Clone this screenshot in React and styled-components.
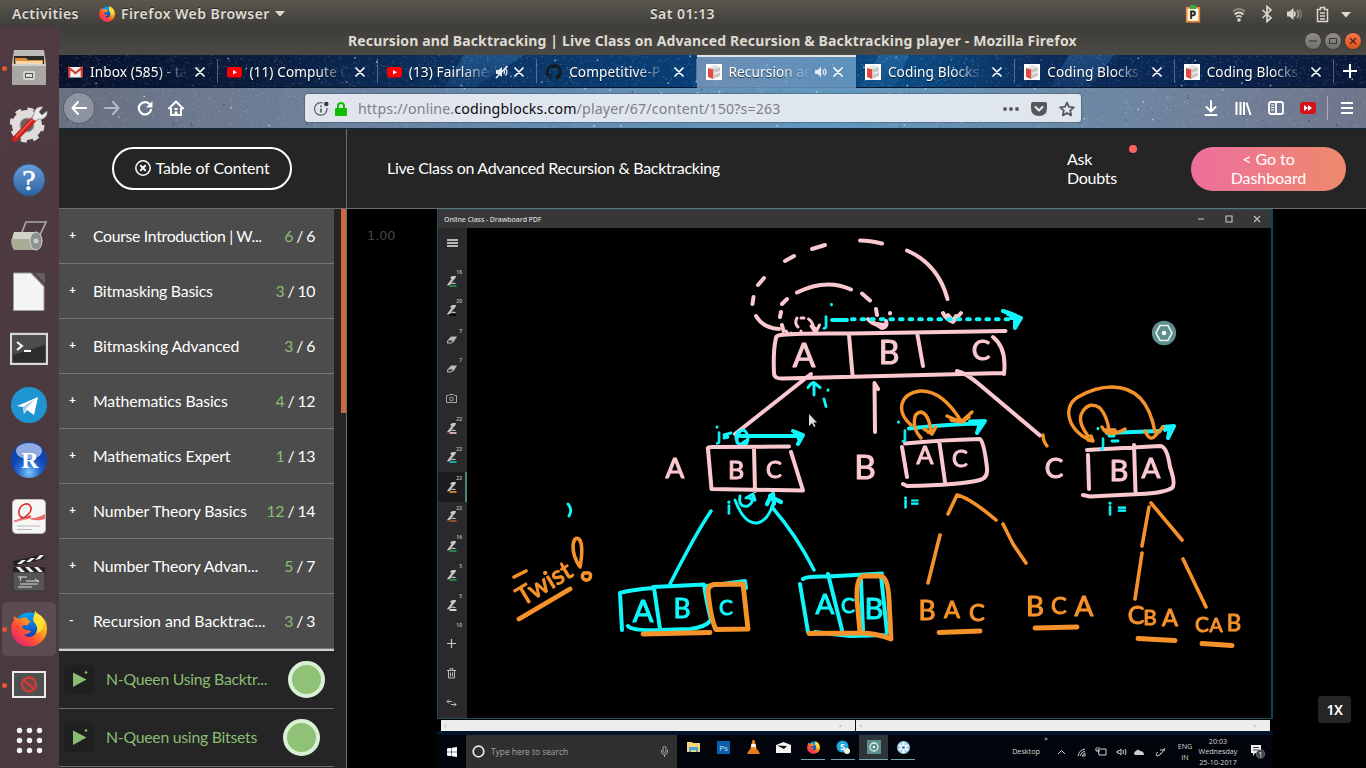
import React from "react";
import styled, { createGlobalStyle, css } from "styled-components";

const Global = createGlobalStyle`
  * { box-sizing: border-box; }
  html, body { margin: 0; padding: 0; }
  body { width: 1366px; height: 768px; overflow: hidden; background: #000; }
  svg { display: block; flex: none; }
`;

const ubuntu = `"Noto Sans", "Open Sans", sans-serif`;
const cabin = `Lato, "Open Sans", sans-serif`;
const segoe = `"Open Sans", "Noto Sans", sans-serif`;

const Screen = styled.div`
  width: 1366px;
  height: 768px;
  display: flex;
  flex-direction: column;
  overflow: hidden;
  background: #000;
`;

/* ---------- desktop top bar ---------- */
const TopBar = styled.header`
  height: 27px;
  flex: none;
  display: grid;
  grid-template-columns: 1fr auto 1fr;
  align-items: center;
  padding: 0 13px 0 12px;
  background: linear-gradient(#5a574e, #3e3d39);
  color: #dfdbd2;
  font: 600 14px/27px ${ubuntu};
  letter-spacing: 0.45px;
  text-shadow: 0 -1px 0 rgba(0, 0, 0, 0.45);
`;
const TopGroup = styled.div`
  display: flex;
  align-items: center;
  justify-content: ${(p) => (p.$end ? "flex-end" : "flex-start")};
`;
const TopLabel = styled.span`
  margin-left: ${(p) => p.$ml || 0}px;
  white-space: nowrap;
`;
const IconSlot = styled.span`
  display: flex;
  margin-left: ${(p) => p.$ml || 0}px;
`;

const Body = styled.div`
  flex: 1;
  min-height: 0;
  display: flex;
`;

/* ---------- dock ---------- */
const Dock = styled.nav`
  width: 59px;
  flex: none;
  padding-top: 13px;
  background: linear-gradient(170deg, #503b42, #4b3a3f 45%, #493a40);
  overflow: hidden;
`;
const DockItem = styled.div`
  height: 56.08px;
  display: flex;
  align-items: center;
  position: relative;
  padding-left: 2px;
  &::before {
    content: "";
    position: absolute;
    left: 2px;
    top: 26px;
    width: 5px;
    height: 5px;
    border-radius: 50%;
    z-index: 1;
    background: ${(p) => (p.$running ? "#e8562a" : "transparent")};
  }
`;
const DockTile = styled.div`
  width: 54px;
  height: 54px;
  border-radius: 5px;
  display: flex;
  align-items: center;
  justify-content: center;
  background: ${(p) => (p.$active ? "#5c4c52" : "transparent")};
`;

/* ---------- browser ---------- */
const Browser = styled.main`
  flex: 1;
  min-width: 0;
  display: flex;
  flex-direction: column;
`;
const TitleBar = styled.div`
  height: 28px;
  flex: none;
  display: flex;
  align-items: center;
  padding: 0 5px 0 289px;
  background: linear-gradient(#3e3d39, #4a4944);
  color: #dfdbd2;
  font: 700 14px/28px ${ubuntu};
`;
const TitleText = styled.span`
  flex: 1;
  letter-spacing: 0.14px;
  white-space: nowrap;
`;
const WinButton = styled.span`
  width: 16px;
  height: 16px;
  margin-left: 4px;
  border-radius: 50%;
  display: flex;
  align-items: center;
  justify-content: center;
  background: ${(p) => (p.$close ? "linear-gradient(#f4764b,#e0521f)" : "linear-gradient(#8f8d85,#706f69)")};
  box-shadow: 0 0 0 0.5px #2c2b28;
`;
const Chrome = styled.div`
  height: 74px;
  flex: none;
  position: relative;
  background: #0a3157;
`;
const Sky = styled.svg`
  position: absolute;
  left: 0;
  top: 0;
  pointer-events: none;
`;
const TabStrip = styled.div`
  position: relative;
  height: 33px;
  display: flex;
  border-bottom: 1px solid #06152c;
  padding-right: 32px;
`;
const Tab = styled.div`
  flex: 1 1 0;
  min-width: 0;
  display: flex;
  align-items: center;
  padding: 0 13px 0 9px;
  ${(p) =>
    p.$active
      ? css`
          background: linear-gradient(90deg, rgba(148, 172, 204, 0.72), rgba(128, 176, 212, 0.7));
          border-top: 2px solid #dfe3ea;
          margin-bottom: -1px;
          padding-bottom: 1px;
        `
      : css`
          padding-top: 1px;
          background: linear-gradient(rgba(190, 200, 215, 0.4), rgba(190, 200, 215, 0.4)) right 50% / 1px 24px no-repeat;
        `}
  color: #fff;
  font: 13.6px/30px ${ubuntu};
`;
const TabLabel = styled.span`
  flex: 1;
  min-width: 0;
  margin-left: 7px;
  overflow: hidden;
  white-space: nowrap;
  letter-spacing: 0.12px;
  text-shadow: 0 1px 1px #000a;
  mask-image: linear-gradient(90deg, #000 calc(100% - 34px), transparent 97%);
`;
const NewTab = styled.div`
  width: 32px;
  margin-right: -32px;
  display: flex;
  align-items: center;
  justify-content: center;
`;
const NavBar = styled.div`
  position: relative;
  height: 40px;
  display: flex;
  align-items: center;
  padding: 0 13px 0 4px;
`;
const BackButton = styled.span`
  width: 32px;
  height: 32px;
  border-radius: 50%;
  border: 1px solid rgba(60, 65, 75, 0.6);
  background: rgba(165, 170, 182, 0.6);
  display: flex;
  align-items: center;
  justify-content: center;
`;
const UrlBar = styled.div`
  width: 778px;
  height: 28px;
  margin-left: 121px;
  padding: 1px 6px 0 8px;
  border-radius: 3px;
  display: flex;
  align-items: center;
  background: rgba(234, 238, 244, 0.92);
  box-shadow: 0 0 1px 1px rgba(40, 60, 90, 0.35);
  color: #7e8085;
  font: 14.2px/27px ${ubuntu};
`;
const Url = styled.span`
  flex: 1;
  margin-left: 11px;
  letter-spacing: 0.15px;
  b {
    font-weight: 400;
    color: #0c0c0d;
  }
`;
const NavDivider = styled.span`
  width: 1px;
  height: 24px;
  margin: 0 13px 0 11px;
  background: rgba(225, 228, 235, 0.5);
`;

/* ---------- course page ---------- */
const Page = styled.div`
  flex: 1;
  min-height: 0;
  display: flex;
  background: #252525;
  font-family: ${cabin};
  color: #fff;
`;
const Sidebar = styled.aside`
  width: 288px;
  flex: none;
  border-right: 1px solid #6d6d6d;
  display: flex;
  flex-direction: column;
`;
const SidebarHead = styled.div`
  height: 80px;
  flex: none;
  border-bottom: 1px solid #6d6d6d;
  display: flex;
  justify-content: center;
  padding: 18px 0 0 0;
`;
const TocButton = styled.button`
  width: 180px;
  height: 43px;
  border: 2px solid #fff;
  border-radius: 22px;
  background: transparent;
  color: #fff;
  display: flex;
  align-items: center;
  justify-content: center;
  gap: 4px;
  padding: 0 0 2px 1px;
  font: 16px ${cabin};
  letter-spacing: -0.14px;
  margin-left: -1px;
`;
const ListWrap = styled.div`
  flex: 1;
  min-height: 0;
  display: flex;
  justify-content: space-between;
`;
const List = styled.div`
  width: 275px;
`;
const Thumb = styled.div`
  width: 5px;
  height: 204px;
  background: #cb6a43;
`;
const Section = styled.div`
  height: 55px;
  display: flex;
  align-items: center;
  padding: 0 19px 1px 10px;
  border-bottom: 1px solid #757575;
  background: #4c4c4c;
  font-size: 15.8px;
`;
const Sign = styled.span`
  width: 24px;
  font-size: 12px;
  font-weight: 700;
  margin-top: -3px;
`;
const SectionName = styled.span`
  flex: 1;
  letter-spacing: ${(p) => p.$ls || 0}px;
  white-space: nowrap;
`;
const Count = styled.span`
  letter-spacing: -0.35px;
  word-spacing: -0.5px;
  white-space: nowrap;
  em {
    font-style: normal;
    color: #8abd74;
  }
`;
const OpenLine = styled.div`
  height: 2px;
  background: #cfcfcf;
`;
const Lesson = styled.div`
  height: 58px;
  display: flex;
  align-items: center;
  padding: 0 ${(p) => p.$pr}px 0 5px;
  border-bottom: 1px solid #6d6d6d;
  color: #8abd74;
  font-size: 15.8px;
`;
const PlayBox = styled.span`
  width: 30px;
  height: 29px;
  border-radius: 5px;
  background: #1f1f1f;
  margin-right: 12px;
`;
const LessonName = styled.span`
  flex: 1;
  white-space: nowrap;
  padding-bottom: 2px;
  letter-spacing: -0.26px;
`;
const DoneRing = styled.span`
  width: 37px;
  height: 37px;
  border-radius: 50%;
  border: 4px solid #d8f0d3;
  background: #8fc177;
`;
const Content = styled.section`
  flex: 1;
  min-width: 0;
  display: flex;
  flex-direction: column;
`;
const ContentHead = styled.div`
  height: 80px;
  flex: none;
  border-bottom: 1px solid #6d6d6d;
  display: flex;
  align-items: center;
  padding: 0 20px 0 40px;
  font-size: 16px;
`;
const LessonTitle = styled.h1`
  flex: 1;
  margin: 0;
  padding-bottom: 2px;
  font-size: 16px;
  font-weight: 400;
  letter-spacing: -0.3px;
`;
const Ask = styled.div`
  width: 70px;
  margin: 0 54px 2px 0;
  line-height: 19px;
  letter-spacing: -0.3px;
  position: relative;
  padding-right: 10px;
`;
const AskDot = styled.span`
  position: absolute;
  left: 62px;
  top: -4px;
  width: 8px;
  height: 8px;
  border-radius: 50%;
  background: #ff6464;
`;
const Dashboard = styled.button`
  width: 155px;
  height: 44px;
  border: 0;
  border-radius: 22px;
  padding: 0 30px 2px;
  color: #fff;
  font: 16px/19px ${cabin};
  letter-spacing: -0.08px;
  background: linear-gradient(90deg, #ee6e9c, #ed8a6c);
`;
const Player = styled.div`
  flex: 1;
  min-height: 0;
  position: relative;
  display: flex;
  background: #000;
`;
const RateLabel = styled.span`
  width: 90px;
  padding: 18px 0 0 20px;
  font: 12.8px/18px "DejaVu Sans", sans-serif;
  color: #484848;
`;
const SpeedBadge = styled.span`
  position: absolute;
  left: 971px;
  top: 487px;
  width: 33px;
  height: 27px;
  border-radius: 3px;
  background: #252525;
  font: 600 14px/27px "Noto Sans", sans-serif;
  letter-spacing: -0.5px;
  text-align: center;
`;

/* ---------- video picture ---------- */
const Video = styled.div`
  width: 836px;
  display: flex;
  flex-direction: column;
  background: #000;
  font-family: ${segoe};
`;
const AppWindow = styled.div`
  height: 510px;
  border: 1px solid #1d5358;
  border-right: 2px solid #0a4166;
  display: flex;
  flex-direction: column;
`;
const AppTitle = styled.div`
  height: 18px;
  flex: none;
  background: #373737;
  display: flex;
  align-items: center;
  padding: 0 10px 0 6px;
  color: #d0d0d0;
  font-size: 7px;
  font-weight: 600;
`;
const AppTitleText = styled.span`
  flex: 1;
  letter-spacing: -0.1px;
`;
const AppBody = styled.div`
  flex: 1;
  display: flex;
  min-height: 0;
`;
const Tools = styled.div`
  width: 29px;
  flex: none;
  background: #2a2a2c;
  display: flex;
  flex-direction: column;
`;
const ToolMenu = styled.div`
  height: 38px;
  display: flex;
  justify-content: center;
  padding-top: 11px;
`;
const ToolScroll = styled.div`
  height: 363px;
  overflow: hidden;
`;
const Tool = styled.div`
  height: 29.45px;
  display: flex;
  align-items: center;
  justify-content: center;
  position: relative;
  background: ${(p) => (p.$active ? "#1c1c1e" : "none")};
  border-right: 2px solid ${(p) => (p.$active ? "#4f8280" : "transparent")};
`;
const ToolBadge = styled.span`
  position: absolute;
  right: 3px;
  top: 3px;
  color: #c4c4c4;
  font-size: 5px;
  font-weight: 600;
  line-height: 7px;
`;
const PageScroll = styled.div`
  height: 11px;
  margin: 1px 3px 0 4px;
  display: flex;
  background: #ededed;
  color: #999;
  font-size: 8px;
  line-height: 9px;
`;
const ScrollPart = styled.span`
  flex: ${(p) => p.$w};
  display: flex;
  justify-content: space-between;
  padding: 0 14px 0 3px;
  border-right: ${(p) => (p.$line ? "1px solid #111" : "0")};
`;
const ScreenEdge = styled.div`
  height: 4px;
  background: #03152d;
`;
const Taskbar = styled.div`
  height: 33px;
  display: flex;
  align-items: center;
  background: #01050b;
  color: #d5d5d5;
`;
const StartBox = styled.div`
  width: 29px;
  display: flex;
  justify-content: center;
`;
const Search = styled.div`
  width: 211px;
  height: 33px;
  padding: 0 8px 0 6px;
  display: flex;
  align-items: center;
  background: #303030;
  color: #a5a5a5;
  font-size: 8.4px;
`;
const SearchText = styled.span`
  flex: 1;
  margin-left: 6px;
`;
const TaskApp = styled.div`
  width: ${(p) => (p.$active ? 29 : 24)}px;
  height: 25px;
  margin-left: ${(p) => p.$ml}px;
  margin-bottom: 8px;
  display: flex;
  align-items: center;
  justify-content: center;
  background: ${(p) => (p.$active ? "#2d3538" : "none")};
  border-bottom: ${(p) => (p.$open ? "1px solid #6fa5a8" : "1px solid transparent")};
`;
const Tray = styled.div`
  flex: 1;
  display: flex;
  align-items: center;
  justify-content: flex-end;
  padding-right: 8px;
  font-size: 7.2px;
  white-space: nowrap;
`;
const TrayText = styled.span`
  margin-left: ${(p) => p.$ml || 0}px;
  width: ${(p) => p.$w}px;
  text-align: center;
  line-height: 10.6px;
  margin-top: ${(p) => p.$mt || 0}px;
`;

/* ---------- icons ---------- */
const Firefox = ({ s, id }) => (
  <svg width={s} height={s} viewBox="0 0 36 36">
    <defs>
      <linearGradient id={id + "o"} x1="1" y1="0" x2=".1" y2="1">
        <stop offset="0" stopColor="#fff04a" />
        <stop offset=".35" stopColor="#ffae1b" />
        <stop offset=".65" stopColor="#ff4d33" />
        <stop offset="1" stopColor="#e01a86" />
      </linearGradient>
      <linearGradient id={id + "b"} x1="0" y1="0" x2="0" y2="1">
        <stop offset="0" stopColor="#00a8ff" />
        <stop offset="1" stopColor="#1b2a9c" />
      </linearGradient>
    </defs>
    <circle cx="18" cy="16" r="14.5" fill={`url(#${id}b)`} />
    <path
      d="M3 5c-.3 2.500 0 4 0 4C0 13-.2 18 .6 22c1.800 8 9 13.500 17.400 13.500C28 35.500 36 28 36 18c0-6-2-9-5-12-1-2-5-3-7-6 0 5-3 7-1 11 4 4 4 8 2 11-3 5-10 5-12 1 3 1 5-1 7-3-1-1-3 0-5-1-4-1-5-4-2-5 2 0 2 1 4 0 0-2 2-2 3-4-3 0-3-1-4-3-3-1-6 0-8 1-2-1-4-2-5-3z"
      fill={`url(#${id}o)`}
    />
    <path d="M24 0c0 5-3 7-1 11 4 4 4 8 2 11 4 0 8-4 8-10 0-3-1-5-2-6-1-2-5-3-7-6z" fill="#ffe93a" opacity=".8" />
  </svg>
);

const dockIcons = {
  files: (
    <svg width="36" height="38" viewBox="0 0 36 38">
      <path d="M3 1h30l2 14H1z" fill="#bdbcb9" />
      <rect x="3" y="7" width="30" height="10" fill="#2c2b28" />
      <path d="M4 9h11l2 2h15v6H4z" fill="#e08a3c" />
      <path d="M5 12h26v3H5z" fill="#fbd7a8" />
      <rect x="1" y="15" width="34" height="21" rx="1" fill="#a8a7a4" />
      <rect x="1" y="15" width="34" height="2" fill="#cfcecb" />
      <rect x="12" y="22" width="12" height="9" rx="2" fill="#d6d5d2" />
      <rect x="14.500" y="24.500" width="7" height="4" fill="#ddd" stroke="#555" />
    </svg>
  ),
  tools: (
    <svg width="38" height="38" viewBox="0 0 38 38">
      <circle cx="17" cy="20" r="11" fill="none" stroke="#deddda" strokeWidth="8" />
      <circle cx="17" cy="20" r="15.500" fill="none" stroke="#deddda" strokeWidth="4" strokeDasharray="6 6.170" />
      <circle cx="17" cy="20" r="7" fill="#6d5f63" stroke="#aaa" />
      <path d="M5 34 27 11" stroke="#c8231c" strokeWidth="6" strokeLinecap="round" />
      <path d="M6 32 25 12" stroke="#ee5c50" strokeWidth="1.500" />
      <path d="M24 9c0-5 4-8 9-7l-4 5 3 3 5-4c1 5-3 9-8 8l-4 2-3-3z" fill="#e9e9e7" stroke="#888" strokeWidth=".7" />
    </svg>
  ),
  help: (
    <svg width="34" height="36" viewBox="0 0 34 36">
      <defs>
        <linearGradient id="hp" x2="0" y2="1"><stop stopColor="#6a9dd8" /><stop offset="1" stopColor="#2c62a0" /></linearGradient>
      </defs>
      <circle cx="17" cy="18" r="16" fill="url(#hp)" stroke="#2d5384" />
      <text x="17" y="28" textAnchor="middle" fontFamily="Liberation Serif, serif" fontSize="30" fill="#fff" stroke="#fff" strokeWidth=".6">?</text>
    </svg>
  ),
  roller: (
    <svg width="38" height="34" viewBox="0 0 38 34">
      <path d="M12 13 16 3h20l-7 15" fill="none" stroke="#a9aaa6" strokeWidth="1.700" />
      <path d="M4 13h22v18H5q-5-9-1-18z" fill="#d3d4c9" />
      <path d="M1 20h23v11H4q-3-4-3-11z" fill="#a9ab92" />
      <ellipse cx="26" cy="22" rx="6" ry="9" fill="#8e908c" stroke="#d5d5d3" />
      <circle cx="26" cy="22" r="2.500" fill="#ccc" />
    </svg>
  ),
  doc: (
    <svg width="34" height="40" viewBox="0 0 34 40">
      <path d="M1.500 1h18L32 14v24.500H1.500z" fill="#f4f4f3" stroke="#9b9b9b" />
      <path d="M23 1h10v11z" fill="#625f60" />
      <path d="M19.500 1 32 14" stroke="#777" strokeWidth="1.500" />
    </svg>
  ),
  terminal: (
    <svg width="38" height="34" viewBox="0 -2 38 34">
      <rect x="1" y="1" width="36" height="30" fill="#2b2c2b" stroke="#d8d8d5" strokeWidth="2.400" />
      <path d="M3 3h32v9L3 22z" fill="#4a4b4a" />
      <path d="m7 9 5 4-5 4M14 18h7" fill="none" stroke="#fff" strokeWidth="2" />
    </svg>
  ),
  telegram: (
    <svg width="36" height="36" viewBox="0 0 36 36">
      <circle cx="18" cy="18" r="18" fill="#1e95d2" />
      <path d="m6 19 21-9-4 18-7-5-3 4-1-7z" fill="#fff" />
      <path d="m12 20 12-8-9 10-2 5z" fill="#a9cde2" />
    </svg>
  ),
  r: (
    <svg width="38" height="38" viewBox="0 0 38 38">
      <defs>
        <radialGradient id="rs" cx=".5" cy=".85"><stop stopColor="#7ec8fa" /><stop offset=".6" stopColor="#2269cf" /><stop offset="1" stopColor="#1044ae" /></radialGradient>
      </defs>
      <circle cx="19" cy="18" r="18" fill="url(#rs)" />
      <ellipse cx="19" cy="9" rx="13" ry="8" fill="#b9cdf1" opacity=".75" />
      <text x="20" y="26" textAnchor="middle" fontFamily="Liberation Serif, serif" fontWeight="700" fontSize="24" fill="#fff">R</text>
    </svg>
  ),
  pdf: (
    <svg width="34" height="36" viewBox="0 0 34 36">
      <rect x=".5" y=".5" width="33" height="34" rx="4" fill="#f6f6f5" stroke="#bbb" />
      <path d="M2 22.500C15 19 20 13 19 8.500 17 2 8 5 7 12c-1 7 6 9 12 5" fill="none" stroke="#d92f2f" strokeWidth="1.600" />
      <path d="M15 19q10 1 18-4v5q-9 3-18-1z" fill="#ea6c6c" />
      <path d="M2 22.500q8-2 13-3" stroke="#ee8b8b" strokeWidth="1.500" />
      <path d="M5 27h23M5 30.500h15" stroke="#b8b8b8" />
    </svg>
  ),
  clapper: (
    <svg width="34" height="38" viewBox="0 0 34 38">
      <rect x="1" y="18" width="32" height="19" fill="#555" stroke="#333" />
      <path d="M1 7 32 0v5L2 12z" fill="#222" />
      <path d="m5 10 5-4h4l-5 4zM14 8l5-4h4l-5 4zM23 6l5-5h4l-4 4z" fill="#eee" />
      <rect x="1" y="13" width="32" height="5" fill="#222" />
      <path d="m4 13 5 5h4l-5-5zM13 13l5 5h4l-5-5zM22 13l5 5h4l-5-5z" fill="#eee" />
      <path d="M6 23h9M9 23l-1 4M14 27h13M23 25l4 3M6 33h14M8 30h18" stroke="#ddd" />
    </svg>
  ),
  firefox: <Firefox s={36} id="dk" />,
  blocked: (
    <svg width="34" height="27" viewBox="0 0 34 27">
      <rect x="1" y="1" width="32" height="25" fill="#4d504e" stroke="#ececeb" strokeWidth="2" />
      <circle cx="17" cy="13.500" r="7" fill="#6c4a49" stroke="#d23c38" strokeWidth="2.300" />
      <path d="m12 9 10 9" stroke="#d23c38" strokeWidth="2.300" />
    </svg>
  ),
  grid: (
    <svg width="27" height="27" viewBox="0 0 27 27">
      {[0, 1, 2].map((r) => [0, 1, 2].map((c) => <circle key={`${r}${c}`} cx={3.500 + c * 10} cy={3.500 + r * 10} r="2.700" fill="#f2f2f2" />))}
    </svg>
  ),
};

const favicons = {
  gmail: (
    <svg width="15" height="16" viewBox="0 0 15 16">
      <rect x="1" y="3" width="13" height="10.500" fill="#f1f1f1" />
      <path d="M1.200 13.500V4l6.300 5 6.300-5v9.500" fill="none" stroke="#d63c30" strokeWidth="2.200" />
    </svg>
  ),
  youtube: (
    <svg width="15" height="16" viewBox="0 0 15 16">
      <rect y="3" width="15" height="10.500" rx="2.500" fill="#f00" />
      <path d="m6 6 4 2.250-4 2.250z" fill="#fff" />
    </svg>
  ),
  github: (
    <svg width="16" height="16" viewBox="0 0 16 16">
      <path fill="#15191e" d="M8 0a8 8 0 0 0-2.500 15.600c.4.100.5-.2.500-.4v-1.500c-2.200.500-2.700-1-2.700-1-.4-.9-.9-1.200-.9-1.200-.7-.5.100-.5.100-.5.800.100 1.200.8 1.200.8.700 1.300 1.900.9 2.300.7.100-.5.300-.9.500-1.100-1.800-.2-3.600-.9-3.600-4 0-.9.300-1.600.8-2.100-.1-.2-.4-1 .1-2.100 0 0 .7-.2 2.200.8a7.500 7.500 0 0 1 4 0c1.500-1 2.200-.8 2.200-.8.400 1.100.2 1.900.1 2.100.5.600.8 1.300.8 2.100 0 3.100-1.900 3.700-3.700 3.900.3.300.6.800.6 1.500v2.200c0 .2.100.5.600.4A8 8 0 0 0 8 0z" />
    </svg>
  ),
  blocks: (
    <svg width="16" height="16" viewBox="0 0 16 16">
      <rect width="16" height="16" fill="#fff" />
      <path d="m2 4 5 1v10l-5-2z" fill="#e8483d" />
      <path d="m7 5 7-2v9l-7 3z" fill="#c9c9c9" />
      <path d="m2 4 6-3 6 2-7 2z" fill="#e3e3e3" />
      <path d="m8 9 6-2v1.500l-6 2z" fill="#f5f5f5" />
    </svg>
  ),
};

const CloseX = () => (
  <svg width="10" height="10" viewBox="0 0 10 10">
    <path d="m1 1 8 8M9 1 1 9" stroke="#fff" strokeWidth="1.700" strokeLinecap="round" />
  </svg>
);
const Speaker = ({ muted, color = "#e6eaf0", s = 14 }) => (
  <svg width={s} height={s} viewBox="0 0 14 14" fill="none" stroke={color} strokeWidth="1.300">
    <path d="M1 5h2.500L7 2v10L3.500 9H1z" fill={color} stroke="none" />
    <path d="M8.800 5q1.500 2 0 4M10.500 3.500q3 3.500 0 7" />
    {muted && <path d="M1 13 12.500 1" strokeWidth="1.800" />}
  </svg>
);

const tabs = [
  { icon: "gmail", label: "Inbox (585) - ta" },
  { icon: "youtube", label: "(11) Compute C" },
  { icon: "youtube", label: "(13) Fairlane", sound: "muted" },
  { icon: "github", label: "Competitive-P" },
  { icon: "blocks", label: "Recursion an", sound: "on", active: true },
  { icon: "blocks", label: "Coding Blocks -" },
  { icon: "blocks", label: "Coding Blocks -" },
  { icon: "blocks", label: "Coding Blocks -" },
];

function makeStars() {
  let seed = 7;
  const rnd = () => (seed = (seed * 16807) % 2147483647) / 2147483647;
  return Array.from({ length: 5200 }, () => {
    const big = rnd() > 0.98;
    return { x: rnd() * 1307, y: rnd() * 74, r: big ? 1.500 : 1, o: big ? 0.65 : 0.08 + rnd() * 0.24, d: rnd() > 0.6 };
  });
}
const stars = makeStars();

const StarField = () => (
  <Sky width="1307" height="74" viewBox="0 0 1307 74">
    <defs>
      <linearGradient id="strip">
        <stop offset="0" stopColor="#07122d" />
        <stop offset=".15" stopColor="#0a1c3d" />
        <stop offset=".32" stopColor="#0c3465" />
        <stop offset=".5" stopColor="#084078" />
        <stop offset=".66" stopColor="#0b4980" />
        <stop offset=".75" stopColor="#0b2c5c" />
        <stop offset=".85" stopColor="#0a2855" />
        <stop offset="1" stopColor="#0a1838" />
      </linearGradient>
      <linearGradient id="navbg">
        <stop offset="0" stopColor="#697080" />
        <stop offset=".18" stopColor="#6f7f98" />
        <stop offset=".35" stopColor="#6489ac" />
        <stop offset=".6" stopColor="#6298bd" />
        <stop offset=".75" stopColor="#6b8ba9" />
        <stop offset=".88" stopColor="#71819a" />
        <stop offset="1" stopColor="#70758a" />
      </linearGradient>
      <linearGradient id="beam" x2="0" y2="1">
        <stop stopColor="#4fa0e0" stopOpacity=".5" />
        <stop offset="1" stopColor="#4fa0e0" stopOpacity=".15" />
      </linearGradient>
    </defs>
    <rect width="1307" height="33" fill="url(#strip)" />
    <path d="M385 33 405 0h60l-50 33zM800 33l20-33h30l-15 33zM990 33l20-33h45l-25 33z" fill="url(#beam)" opacity=".55" />
    <rect y="33" width="1307" height="40" fill="url(#navbg)" />
    {stars.map((s, i) => (
      <rect key={i} x={s.x} y={s.y} width={s.r} height={s.r} fill={s.d && s.y > 33 ? "#2b3f5f" : "#e6f0ff"} opacity={s.o} />
    ))}
    <rect y="73" width="1307" height="1" fill="#082542" />
  </Sky>
);

/* ---------- whiteboard ---------- */
const P = "#fbc8d0";
const C = "#10f6fb";
const O = "#f6922a";

const strokes = [
  [P, 4, "M812 249 825 245M785 261l9-5M758 285l6-7M752.500 304l1-7M756 316Q763 328 779 329M860 240.500Q870 240.500 882 243.500M907 250.500Q938 264 947.500 299M797 292.500Q826 278 851 289.500M862 293.500l8 7M876 309l1 6M782 304l5-5M780 317l1-5M782 325l1.500 6M943 313q3 6 10 9l8-9M948 315l5 6 3-5M868 319q3 4 10 6M874 323l8 5q6-1 4-7M877 324l7 1M890 313v.5"],
  [P, 3, "M798 327q-4-4-1-9M801 318h3M808.500 319q5 3 6.500 14M811 326l4.500 7 4-8M815 328v4M786 331l1 1M791 333v.3M801 331v.3"],
  [P, 4, "M775.500 340q0-4.500 5-5Q790 333 850 333.500L1005.500 331M776 338Q773 350 774 373q0 6 9 5.500L1003 373M993 337Q1007 348 1004 374M849 335l3.500 40M917.500 335 923 366M811 374 735 434M874.500 383 875 432M875 384l3 5M957 371Q966 373 980 385L1040 435.500"],
  [C, 4, "M852 319.300h160"],
  [C, 3.800, "M832 320h15"],
  [C, 2.900, "M814 395V384M808 387.500q5-7 7-4l5 4M824 399l2 7.500M828 390v.4M831.500 304.500v.3M717 427v.3M898.500 422v.3M1098 428.500v.3"],
  [C, 4, "M1003 311l9 3 9 4-6 10 0-7 4-3h-8M1008 314l7 3M740 436H800M793 431l10 4-5 9M795 434l7 2-3 3M909 428.500Q950 424 980 423.500M970 421.500l15-.5-8 12 3-9M1107 433l53-2M1163 427l11-1-6 12 2-10-5 2"],
  [C, 2.900, "M724 435l7-2M724 438l4-1M738 432q-4 6 0 11 5 5 9 0 3-8-3-13-7 0-7 13M741 444l6-4M735 500Q744 524 757 523 768 521 773 504M740 496Q738 508 748 506q5-3 5-9M746 498l7-4 2 6M749 498l4 2M568 504q5 5 1 12M1109 436h5M1112 441h6"],
  [C, 4.200, "M767 504l4-8 4 3 6 3M770 496l3-2 1 10"],
  [P, 4, "M708 449Q707 447 712 447L789 446.500M708 449l3.500 40L803 490.500 791 452M754 448l1 43M905 443.500Q940 440 980 439 984 442 987 468 988 478 980 480 960 485 907 486L903 484M902 447l5 30M939.500 443 945 482M1087 450 1160 446Q1167 446 1170 467 1176 484 1172 488 1164 493 1140 494L1090 496.500 1083 495M1088 455l1 34M1134 445l1.500 47"],
  [C, 3.500, "M711 511Q696 533 670 584M772 507Q797 536 814 570"],
  [C, 4, "M622 630 620 593Q630 590 653 588M653 587 704 584.500Q706 600 711 620M654 588l6 41M628 626Q632 631 660 630L690 629Q706 627 711 620M707 586l38-5 1 7M800 584l8 48M803 579Q806 576 828 576.500L882 573.500M828 574l14 56M881 575l6 57M861 580l2 50M815 632 850 636 886 635"],
  [O, 3.400, "M911 425C896 412 899 394 920 391Q942 390 961 421M947 416l14 6 11-10M951 420l11 2 7-5M921 438C912 428 912 413 921 412Q929 414 931 432M924 429l8 5 4-7M928 432l6-2M1093 441C1070 434 1060 408 1078 397Q1095 387 1112 387 1147 387 1155 432M1088 440l5 1-2-5M1145 431q5 11 10 5l8-9M1088 436Q1076 420 1083 411 1090 401 1100 408 1107 416 1109 430M1102 427q6 12 23 2M1105 430h10M1043 435Q1043 441 1047 446"],
  [O, 3.600, "M957 495l-9 19M957 495Q970 498 996 520M1003 524l10 20 13 19M940 535 928 583M1149 507 1142 546M1151 503l31 37M1142 553l-7 46M1183 559l23 48M573 546Q574 536 579 539 584 545 580 567 573 557 573 546M584 573a4 4 0 1 0 6 5q2-6-4-5M514 577l12-6"],
  [O, 4.900, "M708 592Q708 585 714 584.500L743 584 748 629 716 629.500Q711 620 708 592M809 633.500 862 633Q875 633 891 639L889 600Q888 576 880 576L863 576Q856 578 857 600L860 632M519 619 570 589M939 632.500l41-1.500M1035 628l42-1M1138 638.500l37 2M1202 643.500l30 2M643 634l67-1.500"],
];

const letters = [
  [P, "A", 804, 355, 24], [P, "B", 889, 352, 23], [P, "C", 981, 350, 20],
  [P, "A", 675, 468, 20], [P, "B", 736, 470, 18], [P, "C", 774, 469, 17],
  [P, "B", 865, 467, 24], [P, "A", 925, 455, 18], [P, "C", 960, 458, 17],
  [P, "C", 1054, 468, 20], [P, "B", 1119, 470, 21], [P, "A", 1151, 468, 20],
  [C, "A", 643, 611, 22], [C, "B", 682, 608, 19], [C, "C", 726, 607, 15],
  [C, "A", 825, 604, 20], [C, "C", 848, 605, 15], [C, "B", 874, 608, 21],
  [O, "B", 927, 610, 19], [O, "A", 952, 609, 17], [O, "C", 977, 612, 17],
  [O, "B", 1035, 606, 20], [O, "C", 1059, 605, 17], [O, "A", 1084, 606, 20],
  [O, "C", 1136, 615, 18], [O, "B", 1150, 617, 15], [O, "A", 1170, 617, 17],
  [O, "C", 1202, 624, 15], [O, "A", 1216, 625, 14], [O, "B", 1234, 623, 16],
];

const marks = [
  [C, "ȷ", 826, 326, 19], [C, "ȷ", 719, 441, 17], [C, "ȷ", 905, 439, 18], [C, "ȷ", 1103, 447, 17],
  [C, "i", 729, 514, 18], [C, "i=", 913, 508, 15, 3], [C, "i=", 1120, 515, 17, 5],
];

const Ink = styled.text`
  font-family: Lato, sans-serif;
  font-weight: 400;
  text-anchor: middle;
  letter-spacing: ${(p) => p.$gap || 0}px;
  fill: ${(p) => p.$ink};
  stroke: ${(p) => p.$ink};
  stroke-width: 1px;
  stroke-linejoin: round;
`;
const Board = styled.svg`
  filter: blur(0.35px);
`;

const Whiteboard = () => (
  <Board width="804" height="489" viewBox="467 228 804 489">
    {strokes.map(([ink, w, d], i) => (
      <path key={i} d={d} fill="none" stroke={ink} strokeWidth={w} strokeLinecap="round" strokeLinejoin="round" strokeDasharray={i === 3 ? "2.600 7" : undefined} />
    ))}
    {letters.map(([ink, ch, x, y, h], i) => (
      <Ink key={i} $ink={ink} x={x} y={y + h / 2} fontSize={h / 0.72}>{ch}</Ink>
    ))}
    {marks.map(([ink, ch, x, y, s, gap], i) => (
      <Ink key={i} $ink={ink} $gap={gap} x={x} y={y} fontSize={s}>{ch}</Ink>
    ))}
    <Ink $ink={O} x="545" y="592" fontSize="26" transform="rotate(-31 545 585)">Twist</Ink>
    <path d="M809 414v12l3-3 2 4 1.500-1-2-3.500h3.500z" fill="#ddd" />
    <circle cx="1164" cy="333" r="12.200" fill="#5f8f8d" />
    <path d="M1156 333l4-7.500h8l4 7.500-4 7.500h-8z" fill="none" stroke="#e6f0ef" strokeWidth="1.600" />
    <circle cx="1164" cy="333" r="2.300" fill="#fff" />
  </Board>
);

const PenIcon = ({ color }) => (
  <svg width="12" height="12" viewBox="0 0 12 12">
    <path d="M4 2.500 6.500 1H10L9.500 3 5 8 1.500 10.500 1 10 5.500 4z" fill="#c8c8c8" />
    <path d="M3.500 11h7" stroke={color} strokeWidth="1.600" />
    <path d="M2 10q4-3 7.500-1.500" stroke="#ddd" fill="none" strokeWidth="1" />
  </svg>
);
const EraserIcon = () => (
  <svg width="12" height="10" viewBox="0 0 12 10">
    <path d="M5 1.500h6L8 6.500 5 8.500H1.200L1 6z" fill="#b9b9b9" />
    <path d="M2.500 5.500H7L5 7.500H2z" fill="#2a2a2c" />
  </svg>
);
const CameraIcon = () => (
  <svg width="11" height="9" viewBox="0 0 11 9" fill="none" stroke="#a5a5a5">
    <path d="M.5 1.500h2l1-1h4l1 1h2v7H.5z" />
    <circle cx="5.500" cy="5" r="1.800" />
  </svg>
);

const tools = [
  { n: 16, c: "#21a050" }, { n: 20, c: "#050505" }, { n: 7, eraser: true }, { n: 7, eraser: true }, { camera: true },
  { n: 22, c: P }, { n: 22, c: "#18c5c8" }, { n: 22, c: O, active: true }, { n: 22, c: "#b5562b" },
  { n: 16, c: "#21a050" }, { n: 5, c: "#21a050" }, { n: 5, c: "#fff" }, { n: 10, c: "#21a050" },
];

const taskApps = [
  { ml: 4, icon: <svg width="13" height="12" viewBox="0 0 13 12"><path d="M0 1h5l1 1h7v9H0z" fill="#f3d67c" /><path d="M2 6h9v5H9V9H4v2H2z" fill="#4aa3d8" /></svg> },
  { ml: 6, icon: <svg width="13" height="13" viewBox="0 0 13 13"><rect width="13" height="13" fill="#0b5fa8" /><text x="6.500" y="9.500" fontSize="8" textAnchor="middle" fill="#b7e2ff" fontFamily="Open Sans, sans-serif">Ps</text></svg> },
  { ml: 6, icon: <svg width="13" height="14" viewBox="0 0 13 14"><path d="M5.500 0h2L10 10H3z" fill="#f08a24" /><path d="M4.600 4h3.800l.7 3H3.900z" fill="#fff" /><path d="M2 10h9l2 4H0z" fill="#e57a17" /></svg> },
  { ml: 6, icon: <svg width="15" height="11" viewBox="0 0 15 11"><path d="M0 3 7.500 0 15 3v8H0z" fill="#f3f3f3" /><path d="M1 3.500 8 7l3-3z" fill="#111" /></svg> },
  { ml: 6, open: true, icon: <Firefox s={13} id="tk" /> },
  { ml: 6, open: true, icon: <svg width="14" height="14" viewBox="0 0 14 14"><circle cx="6.500" cy="6.500" r="6" fill="#22a5de" /><text x="6.500" y="10" fontSize="9" fontWeight="700" textAnchor="middle" fill="#fff" fontFamily="Open Sans, sans-serif">S</text><circle cx="11" cy="11" r="3" fill="#eff6d7" /></svg> },
  { ml: 4, open: true, active: true, icon: <svg width="14" height="14" viewBox="0 0 14 14"><rect width="14" height="14" fill="#5d8f8d" /><circle cx="7" cy="7" r="4" fill="none" stroke="#dfeceb" strokeWidth="1.300" /><circle cx="7" cy="7" r="1.200" fill="#fff" /></svg> },
  { ml: 3, open: true, icon: <svg width="13" height="13" viewBox="0 0 13 13"><circle cx="6.500" cy="6.500" r="6.500" fill="#9fd0ea" /><path d="M6.500 1v11M2 4l9 5M11 4 2 9" stroke="#fff" strokeWidth="2" /><circle cx="6.500" cy="6.500" r="1.500" fill="#347fb5" /></svg> },
];

const VideoFrame = () => (
  <Video>
    <AppWindow>
      <AppTitle>
        <AppTitleText>Online Class - Drawboard PDF</AppTitleText>
        <svg width="64" height="8" viewBox="0 0 64 8" fill="none" stroke="#c8c8c8" strokeWidth="1.100">
          <path d="M1 4h6M29 1h6v6h-6zM57 1l6 6M63 1l-6 6" />
        </svg>
      </AppTitle>
      <AppBody>
        <Tools>
          <ToolMenu>
            <svg width="11" height="8" viewBox="0 0 11 8"><path d="M0 1h11M0 4h11M0 7h11" stroke="#e5e5e5" strokeWidth="1.500" /></svg>
          </ToolMenu>
          <ToolScroll>
            {tools.map((t, i) => (
              <Tool key={i} $active={t.active}>
                {t.eraser ? <EraserIcon /> : t.camera ? <CameraIcon /> : <PenIcon color={t.c} />}
                {t.n && <ToolBadge>{t.n}</ToolBadge>}
              </Tool>
            ))}
          </ToolScroll>
          <Tool><svg width="11" height="11" viewBox="0 0 11 11"><path d="M5.500 1v9M1 5.500h9" stroke="#ccc" strokeWidth="1.200" /></svg></Tool>
          <Tool><svg width="9" height="11" viewBox="0 0 9 11" fill="none" stroke="#bdbdbd"><path d="M0 2.500h9M3 2V.7h3V2M1.500 3v7h6V3M3.500 4.500v4M5.500 4.500v4" /></svg></Tool>
          <Tool><svg width="11" height="8" viewBox="0 0 11 8" fill="none" stroke="#bdbdbd"><path d="M3 .5 1 2.500l2 2M1 2.500h5M8 3.500l2 2-2 2M10 5.500H5" /></svg></Tool>
        </Tools>
        <Whiteboard />
      </AppBody>
    </AppWindow>
    <PageScroll>
      <ScrollPart $w={415} $line><span>‹</span><span>›</span></ScrollPart>
      <ScrollPart $w={414}><span>‹</span><span>›</span></ScrollPart>
    </PageScroll>
    <ScreenEdge />
    <Taskbar>
      <StartBox>
        <svg width="10" height="10" viewBox="0 0 10 10"><path d="M0 1.500 4.500.8v3.900H0zM5 .7 10 0v4.700H5zM0 5.200h4.500v4L0 8.500zM5 5.200h5V10l-5-.8z" fill="#fff" /></svg>
      </StartBox>
      <Search>
        <svg width="13" height="13" viewBox="0 0 13 13"><circle cx="6.500" cy="6.500" r="5.300" fill="none" stroke="#ececec" strokeWidth="1.700" /></svg>
        <SearchText>Type here to search</SearchText>
        <svg width="9" height="11" viewBox="0 0 9 11" fill="none" stroke="#a5a5a5"><rect x="3" y=".5" width="3" height="6" rx="1.500" /><path d="M1.500 4v2q0 2.500 3 2.500t3-2.500V4M4.500 8.500V11" /></svg>
      </Search>
      {taskApps.map((a, i) => (
        <TaskApp key={i} $ml={a.ml} $open={a.open} $active={a.active}>{a.icon}</TaskApp>
      ))}
      <Tray>
        <TrayText $w={28}>Desktop</TrayText>
        <TrayText $w={8} $mt={-26} $ml={2}>»</TrayText>
        <svg width="120" height="12" viewBox="0 0 120 12" fill="none" stroke="#cfcfcf">
          <path d="M8 8l3.500-3.500L15 8" />
          <path d="M28 10q1-6 7-7M30 10q1-4 5-5M32 10q1-2 3-3v3z" />
          <path d="M48 3h8v6h-7zM46 2v3h4M47 2v-1M49 2v-1" />
          <path d="M67 5h2l2-2v6l-2-2h-2zM73 4q1 2 0 4M75 3q2 3 0 6" />
          <path d="M85 9q-2-3 1-4 2-3 4 0 4 0 4 4z" fill="#cfcfcf" stroke="none" />
          <path d="M115 2l-4 6M108 6q-3 1-1 4 3 0 4-3M110 4q4-1 5 1" />
        </svg>
        <TrayText $w={18} $ml={6}>ENG<br />IN</TrayText>
        <TrayText $w={42} $ml={3}>20:03<br />Wednesday<br />25-10-2017</TrayText>
        <IconSlot $ml={11}>
          <svg width="15" height="15" viewBox="0 0 15 15"><path d="M1 1h10v8H5l-2 3V9H1z" fill="#eee" /><path d="M3 3.500h6M3 6h6" stroke="#111" strokeWidth=".8" /><circle cx="10.500" cy="10" r="4.300" fill="#444" stroke="#999" strokeWidth=".6" /><text x="10.500" y="12.500" fontSize="7" textAnchor="middle" fill="#fff" fontFamily="Open Sans, sans-serif">1</text></svg>
        </IconSlot>
      </Tray>
    </Taskbar>
  </Video>
);

const sections = [
  ["+", "Course Introduction | W...", "6", "6", -0.32],
  ["+", "Bitmasking Basics", "3", "10", -0.2],
  ["+", "Bitmasking Advanced", "3", "6", -0.1],
  ["+", "Mathematics Basics", "4", "12", -0.1],
  ["+", "Mathematics Expert", "1", "13", -0.1],
  ["+", "Number Theory Basics", "12", "14", -0.1],
  ["+", "Number Theory Advan...", "5", "7", -0.1],
  ["-", "Recursion and Backtrac...", "3", "3", -0.03],
];

const App = () => (
  <Screen>
    <Global />
    <TopBar>
      <TopGroup>
        <TopLabel>Activities</TopLabel>
        <IconSlot $ml={20}><Firefox s={16} id="tb" /></IconSlot>
        <TopLabel $ml={6}>Firefox Web Browser</TopLabel>
        <IconSlot $ml={5}><svg width="10" height="6" viewBox="0 0 10 6"><path d="M0 0h10L5 5.500z" fill="#dfdbd2" /></svg></IconSlot>
      </TopGroup>
      <TopLabel>Sat 01:13</TopLabel>
      <TopGroup $end>
        <svg width="166" height="18" viewBox="0 0 166 18">
          <rect x="1.700" y="2.700" width="12.600" height="14" fill="#fff7df" stroke="#e8873a" strokeWidth="1.700" />
          <rect x="5" y="0" width="6" height="4" fill="#39a849" />
          <text x="8" y="13.800" fontSize="11" fontWeight="700" textAnchor="middle" fill="#222" fontFamily="Noto Sans, sans-serif">P</text>
          <g fill="none" stroke="#d9d6cd" strokeWidth="1.700">
            <path d="M48 6.500q6-5 12 0" opacity=".45" />
            <path d="M49.500 9.500q4.500-4 9 0M51.500 12q2.500-2.200 5 0" />
            <path d="m77.500 5 8.500 8-4 3.500v-15l4 3.500-8.500 8" strokeWidth="1.700" />
            <path d="M109 6.500q2 2.500 0 5" />
            <path d="M112 5q3 4 0 8" opacity=".6" />
            <path d="M114.500 4q3.500 5 0 10" opacity=".3" />
            <path d="M132.500 4.500h3v-2h4v2h3v12h-10zM135 8h5M135 11h5M135 14h5" strokeWidth="1.500" />
          </g>
          <circle cx="54" cy="15" r="1.800" fill="#d9d6cd" />
          <path d="M102 6.500h2.500l4-3.500v12l-4-3.500H102z" fill="#d9d6cd" />
          <path d="M156 7h10l-5 5.500z" fill="#dfdbd2" />
        </svg>
        <IconSlot $ml={2} />
      </TopGroup>
    </TopBar>
    <Body>
      <Dock>
        {Object.entries(dockIcons).map(([name, icon]) => (
          <DockItem key={name} $running={["files", "firefox", "blocked"].includes(name)}>
            <DockTile $active={name === "firefox"}>{icon}</DockTile>
          </DockItem>
        ))}
      </Dock>
      <Browser>
        <TitleBar>
          <TitleText>Recursion and Backtracking | Live Class on Advanced Recursion &amp; Backtracking player - Mozilla Firefox</TitleText>
          <WinButton><svg width="8" height="8" viewBox="0 0 8 8"><path d="M0 4h8" stroke="#3a3935" strokeWidth="1.200" /></svg></WinButton>
          <WinButton><svg width="8" height="8" viewBox="0 0 8 8"><rect x=".5" y="1.500" width="7" height="5" fill="none" stroke="#3a3935" /></svg></WinButton>
          <WinButton $close><svg width="8" height="8" viewBox="0 0 8 8"><path d="m1 1 6 6M7 1 1 7" stroke="#4a2312" strokeWidth="1.200" /></svg></WinButton>
        </TitleBar>
        <Chrome>
          <StarField />
          <TabStrip>
            {tabs.map((t, i) => (
              <Tab key={i} $active={t.active}>
                {favicons[t.icon]}
                <TabLabel>{t.label}</TabLabel>
                {t.sound && <Speaker muted={t.sound === "muted"} />}
                <IconSlot $ml={5}><CloseX /></IconSlot>
              </Tab>
            ))}
            <NewTab><svg width="14" height="14" viewBox="0 0 14 14"><path d="M7 0v14M0 7h14" stroke="#fff" strokeWidth="2" /></svg></NewTab>
          </TabStrip>
          <NavBar>
            <BackButton>
              <svg width="16" height="14" viewBox="0 0 16 14" fill="none" stroke="#fff" strokeWidth="2" strokeLinecap="round" strokeLinejoin="round"><path d="M7 1 1.500 7 7 13M2 7h13" /></svg>
            </BackButton>
            <IconSlot $ml={9}><svg width="16" height="14" viewBox="0 0 16 14" fill="none" stroke="#b3b9c5" strokeWidth="2" strokeLinecap="round" strokeLinejoin="round"><path d="m9 1 5.500 6L9 13M14 7H1" /></svg></IconSlot>
            <IconSlot $ml={17}><svg width="16" height="16" viewBox="0 0 16 16"><path d="M13 4.500A6.200 6.200 0 1 0 14 10" fill="none" stroke="#fff" strokeWidth="2.200" strokeLinecap="round" /><path d="M15.500 1v6.500H9z" fill="#fff" /></svg></IconSlot>
            <IconSlot $ml={15}><svg width="16" height="16" viewBox="0 0 16 16"><path d="M1 8.500 8 1.500l7 7" fill="none" stroke="#fff" strokeWidth="2" strokeLinecap="round" strokeLinejoin="round" /><path d="M3 8v7h10V8" fill="none" stroke="#fff" strokeWidth="2" /><path d="M6.500 8h3v2h-3zM6.500 11.500h3V15h-3z" fill="#fff" /></svg></IconSlot>
            <UrlBar>
              <svg width="16" height="16" viewBox="0 0 16 16" fill="none" stroke="#5f6165" strokeWidth="1.200"><path d="M10 2A6.300 6.300 0 1 0 14 7" /><circle cx="13.300" cy="3" r="2.300" fill="#3b3c3f" stroke="none" /><path d="M8 7.500v4M8 4.500v1.500" strokeWidth="1.800" /></svg>
              <IconSlot $ml={6}><svg width="12" height="14" viewBox="0 0 12 14"><path d="M3 7V4a3 3 0 0 1 6 0v3" fill="none" stroke="#12bc00" strokeWidth="2" /><rect y="6" width="12" height="8" rx="1" fill="#12bc00" /></svg></IconSlot>
              <Url>https://online.<b>codingblocks.com</b>/player/67/content/150?s=263</Url>
              <svg width="16" height="4" viewBox="0 0 16 4" fill="#55575b"><circle cx="2" cy="2" r="1.900" /><circle cx="8" cy="2" r="1.900" /><circle cx="14" cy="2" r="1.900" /></svg>
              <IconSlot $ml={12}><svg width="16" height="14" viewBox="0 0 16 14"><path d="M0 2q0-2 2-2h12q2 0 2 2v4q0 8-8 8T0 6z" fill="#55575b" /><path d="m4.500 5 3.500 3.500L11.500 5" fill="none" stroke="#e8ebf0" strokeWidth="2" strokeLinecap="round" strokeLinejoin="round" /></svg></IconSlot>
              <IconSlot $ml={12}><svg width="16" height="16" viewBox="0 0 16 16"><path d="m8 1.500 2 4.400 4.800.5-3.600 3.200 1 4.800L8 12l-4.200 2.400 1-4.800L1.200 6.400 6 5.900z" fill="none" stroke="#55575b" strokeWidth="1.800" strokeLinejoin="round" /></svg></IconSlot>
            </UrlBar>
            <IconSlot $ml={123}><svg width="14" height="16" viewBox="0 0 14 16" fill="none" stroke="#fff" strokeWidth="2" strokeLinecap="round" strokeLinejoin="round"><path d="M7 1v10M2.500 7 7 11.500 11.500 7M1.500 15h11" /></svg></IconSlot>
            <IconSlot $ml={17}><svg width="17" height="15" viewBox="0 0 17 15" stroke="#fff" strokeWidth="2"><path d="M1.500 1v13M5.500 1v13M9 1v13M11.500 1.500 15.500 14" /></svg></IconSlot>
            <IconSlot $ml={16}><svg width="16" height="14" viewBox="0 0 16 14" fill="none" stroke="#fff" strokeWidth="1.800"><rect x="1" y="1" width="14" height="12" rx="2" /><path d="M8 1v12" /><path d="M3 4h3M3 6.500h3M3 9h3" strokeWidth="1.200" /></svg></IconSlot>
            <IconSlot $ml={16}><svg width="16" height="12" viewBox="0 0 16 12"><rect width="16" height="12" rx="3" fill="#d5121a" /><path d="m4 3 4 3-4 3zM8 3l4 3-4 3z" fill="#fff" /></svg></IconSlot>
            <NavDivider />
            <svg width="12" height="12" viewBox="0 0 12 12"><path d="M0 1h12M0 6h12M0 11h12" stroke="#fff" strokeWidth="2" /></svg>
          </NavBar>
        </Chrome>
        <Page>
          <Sidebar>
            <SidebarHead>
              <TocButton>
                <svg width="16" height="16" viewBox="0 0 16 16" fill="none" stroke="#fff"><circle cx="8" cy="8" r="7.200" strokeWidth="1.500" /><path d="m5.300 5.300 5.400 5.400M10.700 5.300l-5.400 5.400" strokeWidth="2" /></svg>
                Table of Content
              </TocButton>
            </SidebarHead>
            <ListWrap>
              <List>
                {sections.map(([sign, name, done, total, ls]) => (
                  <Section key={name}>
                    <Sign>{sign}</Sign>
                    <SectionName $ls={ls}>{name}</SectionName>
                    <Count><em>{done}</em> / {total}</Count>
                  </Section>
                ))}
                <OpenLine />
                {[["N-Queen Using Backtr...", 9], ["N-Queen using Bitsets", 14]].map(([name, pr]) => (
                  <Lesson key={name} $pr={pr}>
                    <PlayBox><svg width="30" height="29" viewBox="0 0 30 29" fill="#8abd74"><path d="M9 7.500 22.500 14.500 9 22z" /><circle cx="22" cy="7.500" r="1.300" /></svg></PlayBox>
                    <LessonName>{name}</LessonName>
                    <DoneRing />
                  </Lesson>
                ))}
              </List>
              <Thumb />
            </ListWrap>
          </Sidebar>
          <Content>
            <ContentHead>
              <LessonTitle>Live Class on Advanced Recursion &amp; Backtracking</LessonTitle>
              <Ask>Ask Doubts<AskDot /></Ask>
              <Dashboard>&lt; Go to Dashboard</Dashboard>
            </ContentHead>
            <Player>
              <RateLabel>1.00</RateLabel>
              <VideoFrame />
              <SpeedBadge>1X</SpeedBadge>
            </Player>
          </Content>
        </Page>
      </Browser>
    </Body>
  </Screen>
);

export default App;
